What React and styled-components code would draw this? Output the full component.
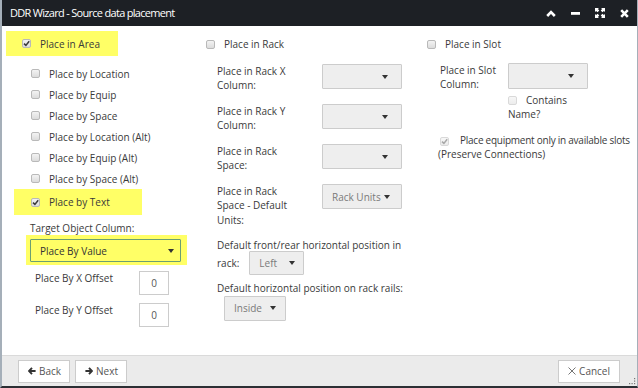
import React from 'react';
import styled, { createGlobalStyle } from 'styled-components';

const GlobalStyle = createGlobalStyle`
  html, body { margin: 0; padding: 0; background: #2c2f34; }
  body { font-family: 'Open Sans', 'Liberation Sans', sans-serif; }
  * { box-sizing: border-box; }
`;

const Dialog = styled.div`
  position: relative;
  width: 638px;
  height: 388px;
  display: flex;
  flex-direction: column;
  background: #fff;
  border-left: 2px solid #a5afb9;
  border-right: 1px solid #a5afb9;
  border-bottom: 2px solid #2c2f34;
  overflow: hidden;
`;

const TitleBar = styled.div`
  height: 26px;
  flex: none;
  display: flex;
  align-items: center;
  padding: 0 8px 0 8px;
  background: #1d2025;
  color: #fff;
`;

const Title = styled.div`
  font-size: 11px;
  letter-spacing: -0.7px;
  line-height: 14px;
  margin-top: -1px;
`;

const TitleIcons = styled.div`
  margin-left: auto;
  display: flex;
  align-items: center;
  gap: 15px;
`;

const Body = styled.div`
  flex: 1;
  display: grid;
  grid-template-columns: 203px 222px 1fr;
  font-size: 10px;
  color: #3a3a3a;
`;

const Column = styled.div`
  display: flex;
  flex-direction: column;
  align-items: flex-start;
  min-width: 0;
`;

const CheckRow = styled.label`
  display: flex;
  align-items: center;
  gap: 9px;
  height: ${p => p.$h || 21}px;
  width: ${p => (p.$w ? `${p.$w}px` : 'auto')};
  margin-left: ${p => p.$ml || 0}px;
  margin-top: ${p => p.$mt || 0}px;
  padding-left: ${p => p.$pl || 0}px;
  background: ${p => (p.$highlight ? '#ffff66' : 'transparent')};
  white-space: nowrap;
`;

const SubList = styled.div`
  display: flex;
  flex-direction: column;
  margin-top: 7px;
`;

const Box = styled.span`
  display: inline-flex;
  align-items: center;
  justify-content: center;
  flex: none;
  width: 9px;
  height: 9px;
  border: 1px solid ${p => (p.$disabled ? '#d9d9d9' : '#b9b9b9')};
  border-radius: 2px;
  background: ${p => (p.$disabled ? 'linear-gradient(#f7f7f7, #ececec)' : 'linear-gradient(#f3f3f3, #dcdcdc)')};
  vertical-align: ${p => (p.$inline ? '-1px' : 'baseline')};
  margin-right: ${p => p.$mr || 0}px;
  margin-left: ${p => p.$ml || 0}px;
`;

const Check = ({ checked, disabled, inline, mr, ml }) => (
  <Box $disabled={disabled} $inline={inline} $mr={mr} $ml={ml}>
    {checked && (
      <svg width="7" height="7" viewBox="0 0 7 7">
        <path d="M1 3.6 L2.9 5.4 L6.2 1.2" fill="none" stroke={disabled ? '#a8a8a8' : '#3a3a3a'} strokeWidth="1.5" />
      </svg>
    )}
  </Box>
);

const TextLine = styled.div`
  line-height: 14.4px;
  margin-top: ${p => p.$mt || 0}px;
  margin-left: ${p => p.$ml || 0}px;
  padding-left: ${p => p.$pl || 0}px;
  letter-spacing: ${p => p.$ls || 0}px;
  white-space: nowrap;
`;

const SelectHighlight = styled.div`
  background: #ffff66;
  padding: 4px 6px 3px 4px;
  margin-left: 24px;
`;

const Select = styled.div`
  display: flex;
  align-items: center;
  width: ${p => p.$w}px;
  height: ${p => p.$h || 25}px;
  padding: 0 ${p => p.$pr || 13}px 0 ${p => p.$pl || 10}px;
  border: 1px solid ${p => (p.$focus ? '#6b9f72' : '#cccccc')};
  border-radius: 1px;
  background: ${p => (p.$focus ? 'transparent' : '#eeeeee')};
  color: ${p => (p.$focus ? '#333' : '#7a7a7a')};
  font-size: 10px;
  white-space: nowrap;
  margin-left: ${p => p.$ml || 0}px;
  flex: none;
`;

const Caret = styled.span`
  margin-left: auto;
  flex: none;
  width: 0;
  height: 0;
  border-left: 3.5px solid transparent;
  border-right: 3.5px solid transparent;
  border-top: 4px solid #333;
`;

const Dropdown = ({ value, ...rest }) => (
  <Select {...rest}>
    <span>{value}</span>
    <Caret />
  </Select>
);

const OffsetList = styled.div`
  display: flex;
  flex-direction: column;
  gap: 8px;
  margin-top: 6px;
  padding-left: 33px;
`;

const OffsetRow = styled.div`
  display: flex;
  align-items: flex-start;
`;

const OffsetLabel = styled.div`
  width: 104px;
  line-height: 14px;
`;

const NumberInput = styled.div`
  width: 30px;
  height: 24px;
  border: 1px solid #cccccc;
  background: #fff;
  display: flex;
  align-items: center;
  justify-content: center;
  color: #555;
`;

const FieldGrid = styled.div`
  display: grid;
  grid-template-columns: ${p => p.$labelW}px auto;
  row-gap: 11.2px;
  align-items: start;
  padding-left: ${p => p.$pl}px;
  margin-top: ${p => p.$mt || 7}px;
`;

const FieldLabel = styled.div`
  width: ${p => p.$w || 85}px;
  line-height: 14.4px;
`;

const PositionBlock = styled.div`
  padding-left: 12px;
  margin-top: 10.6px;
`;

const InlineRow = styled.div`
  display: flex;
  align-items: center;
  gap: 10px;
  margin-top: -1px;
`;

const SelectCell = styled.div`
  display: flex;
  flex-direction: column;
`;

const WrapText = styled.div`
  width: ${p => (p.$w ? `${p.$w}px` : 'auto')};
  line-height: 14.4px;
  margin-top: ${p => p.$mt || 0}px;
  padding-left: ${p => p.$pl || 0}px;
`;

const Footer = styled.div`
  position: relative;
  height: 31px;
  flex: none;
  display: flex;
  align-items: center;
  gap: 5px;
  padding: 0 17px 0 16px;
  background: #ebebeb;
  border-top: 1px solid #dadada;
`;

const Button = styled.div`
  display: flex;
  align-items: center;
  gap: 3px;
  height: 23px;
  padding: 0 ${p => p.$pr || 8}px 0 9px;
  border: 1px solid #cccccc;
  background: #fff;
  color: #555;
  font-size: 10px;
  margin-left: ${p => (p.$right ? 'auto' : '0')};
`;

const Grip = styled.svg`
  position: absolute;
  right: 1px;
  bottom: 1px;
`;

const ChevronUp = () => (
  <svg width="10" height="7" viewBox="0 0 10 7">
    <path d="M1.2 6 L5 2.2 L8.8 6" fill="none" stroke="#fff" strokeWidth="2.6" />
  </svg>
);
const Minus = () => (
  <svg width="9" height="10" viewBox="0 0 9 10">
    <rect x="0" y="4" width="9" height="2.8" fill="#fff" />
  </svg>
);
const Expand = () => (
  <svg width="10" height="10" viewBox="0 0 10 10" fill="#fff">
    <path d="M0 0 H4 L2.9 1.1 L4.3 2.5 L2.5 4.3 L1.1 2.9 L0 4 Z" />
    <path d="M10 0 H6 L7.1 1.1 L5.7 2.5 L7.5 4.3 L8.9 2.9 L10 4 Z" />
    <path d="M0 10 H4 L2.9 8.9 L4.3 7.5 L2.5 5.7 L1.1 7.1 L0 6 Z" />
    <path d="M10 10 H6 L7.1 8.9 L5.7 7.5 L7.5 5.7 L8.9 7.1 L10 6 Z" />
  </svg>
);
const Close = () => (
  <svg width="9" height="9" viewBox="0 0 9 9">
    <path d="M1.2 1.2 L7.8 7.8 M7.8 1.2 L1.2 7.8" stroke="#fff" strokeWidth="2.6" />
  </svg>
);
const ArrowLeft = () => (
  <svg width="8" height="8" viewBox="0 0 8 8">
    <path d="M4 0.8 L1 4 L4 7.2 M1.2 4 H7.6" fill="none" stroke="#333" strokeWidth="1.9" />
  </svg>
);
const ArrowRight = () => (
  <svg width="8" height="8" viewBox="0 0 8 8">
    <path d="M4 0.8 L7 4 L4 7.2 M6.8 4 H0.4" fill="none" stroke="#333" strokeWidth="1.9" />
  </svg>
);
const Times = () => (
  <svg width="8" height="8" viewBox="0 0 8 8">
    <path d="M0.5 0.5 L7.5 7.5 M7.5 0.5 L0.5 7.5" stroke="#666" strokeWidth="0.9" />
  </svg>
);

const subItems = [
  'Place by Location',
  'Place by Equip',
  'Place by Space',
  'Place by Location (Alt)',
  'Place by Equip (Alt)',
  'Place by Space (Alt)',
];

export default function App() {
  return (
    <>
      <GlobalStyle />
      <Dialog>
        <TitleBar>
          <Title>DDR Wizard - Source data placement</Title>
          <TitleIcons>
            <ChevronUp />
            <Minus />
            <Expand />
            <Close />
          </TitleIcons>
        </TitleBar>
        <Body>
          <Column>
            <CheckRow $highlight $h={25} $w={112} $ml={4} $mt={5} $pl={16}>
              <Check checked />
              Place in Area
            </CheckRow>
            <SubList>
              {subItems.map(t => (
                <CheckRow key={t} $pl={29}>
                  <Check />
                  {t}
                </CheckRow>
              ))}
            </SubList>
            <CheckRow $highlight $h={26} $w={128} $ml={12} $pl={17}>
              <Check checked />
              Place by Text
            </CheckRow>
            <TextLine $mt={6} $ml={28}>Target Object Column:</TextLine>
            <SelectHighlight>
              <Dropdown $focus $w={151} $h={23} $pl={9} $pr={6} value="Place By Value" />
            </SelectHighlight>
            <OffsetList>
              <OffsetRow>
                <OffsetLabel>Place By X Offset</OffsetLabel>
                <NumberInput>0</NumberInput>
              </OffsetRow>
              <OffsetRow>
                <OffsetLabel>Place By Y Offset</OffsetLabel>
                <NumberInput>0</NumberInput>
              </OffsetRow>
            </OffsetList>
          </Column>

          <Column>
            <CheckRow $h={26} $mt={5} $pl={1}>
              <Check />
              Place in Rack
            </CheckRow>
            <FieldGrid $labelW={105} $pl={12}>
              <FieldLabel>Place in Rack X Column:</FieldLabel>
              <Dropdown $w={80} value="" />
              <FieldLabel>Place in Rack Y Column:</FieldLabel>
              <Dropdown $w={80} value="" />
              <FieldLabel>Place in Rack Space:</FieldLabel>
              <Dropdown $w={80} value="" />
              <FieldLabel>Place in Rack Space - Default Units:</FieldLabel>
              <Dropdown $w={80} $pl={9} $pr={11} value="Rack Units" />
            </FieldGrid>
            <PositionBlock>
              <TextLine>Default front/rear horizontal position in</TextLine>
              <InlineRow>
                <span>rack:</span>
                <Dropdown $w={55} $h={24} $pl={9} $pr={8} value="Left" />
              </InlineRow>
              <TextLine $mt={6}>Default horizontal position on rack rails:</TextLine>
              <Dropdown $w={62} $ml={7} $pl={9} $pr={9} value="Inside" />
            </PositionBlock>
          </Column>

          <Column>
            <CheckRow $h={26} $mt={5}>
              <Check />
              Place in Slot
            </CheckRow>
            <FieldGrid $labelW={68} $pl={13} $mt={6}>
              <FieldLabel $w={66}>Place in Slot Column:</FieldLabel>
              <SelectCell>
                <Dropdown $w={80} $h={26} value="" />
                <WrapText $w={80} $mt={4}>
                  <Check disabled inline mr={9} />
                  Contains Name?
                </WrapText>
              </SelectCell>
            </FieldGrid>
            <TextLine $mt={11} $pl={11} $ls={-0.25}>
              <Check checked disabled inline ml={2} mr={11} />
              Place equipment only in available slots
            </TextLine>
            <TextLine $pl={11}>(Preserve Connections)</TextLine>
          </Column>
        </Body>
        <Footer>
          <Button>
            <ArrowLeft />
            Back
          </Button>
          <Button>
            <ArrowRight />
            Next
          </Button>
          <Button $right $pr={9}>
            <Times />
            Cancel
          </Button>
          <Grip width="7" height="7" viewBox="0 0 7 7" fill="#777">
            <rect x="5" y="0" width="1.2" height="1.2" />
            <rect x="5" y="2.5" width="1.2" height="1.2" />
            <rect x="5" y="5" width="1.2" height="1.2" />
            <rect x="2.5" y="5" width="1.2" height="1.2" />
            <rect x="0" y="5" width="1.2" height="1.2" />
          </Grip>
        </Footer>
      </Dialog>
    </>
  );
}
